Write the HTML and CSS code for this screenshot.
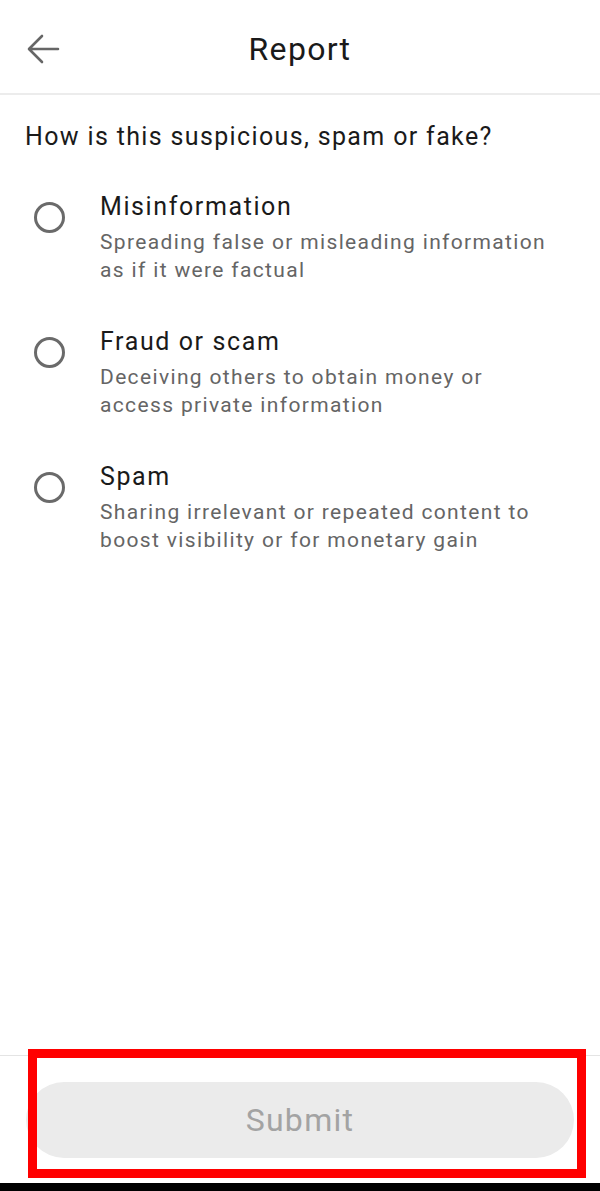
FILE: index.html
```html
<!DOCTYPE html>
<html lang="en">
<head>
<meta charset="utf-8">
<title>Report</title>
<link rel="stylesheet" href="styles.css">
</head>
<body>
<div class="screen">
  <header class="topbar">
    <button class="back" aria-label="Back">
      <svg width="34" height="30" viewBox="0 0 34 30" fill="none" stroke="#666" stroke-width="2.6" stroke-linecap="round" stroke-linejoin="round">
        <path d="M32 15H3.5M16 2L3 15L16 28"/>
      </svg>
    </button>
    <h1 class="title">Report</h1>
  </header>

  <main class="content">
    <p class="question">How is this suspicious, spam or fake?</p>
    <ul class="options">
      <li class="option">
        <span class="radio"></span>
        <div class="option-text">
          <div class="option-title">Misinformation</div>
          <div class="option-desc">Spreading false or misleading information as if it were factual</div>
        </div>
      </li>
      <li class="option">
        <span class="radio"></span>
        <div class="option-text">
          <div class="option-title">Fraud or scam</div>
          <div class="option-desc">Deceiving others to obtain money or access private information</div>
        </div>
      </li>
      <li class="option">
        <span class="radio"></span>
        <div class="option-text">
          <div class="option-title">Spam</div>
          <div class="option-desc">Sharing irrelevant or repeated content to boost visibility or for monetary gain</div>
        </div>
      </li>
    </ul>
  </main>

  <footer class="footer">
    <button class="submit" disabled>Submit</button>
    <div class="highlight"></div>
  </footer>
  <div class="navbar"></div>
</div>
</body>
</html>
```

FILE: styles.css
```css
* { box-sizing: border-box; }
html, body { margin: 0; padding: 0; background: #fff; }
body {
  font-family: Roboto, "Noto Sans", "Liberation Sans", sans-serif;
  color: #1f1f1f;
}
.screen {
  width: 600px;
  height: 1191px;
  display: flex;
  flex-direction: column;
}
.topbar {
  height: 95px;
  flex: none;
  display: flex;
  align-items: center;
  justify-content: center;
  position: relative;
  border-bottom: 2px solid #ececec;
  padding-top: 4px;
}
.back {
  position: absolute;
  left: 26px;
  top: 34px;
  padding: 0;
  border: 0;
  background: none;
  display: flex;
}
.title {
  margin: 0;
  font-size: 32px;
  font-weight: 400;
  letter-spacing: 1.3px;
  color: #1a1a1a;
  line-height: 40px;
}
.content {
  flex: 1;
  padding: 27px 25px 0 25px;
}
.question {
  margin: 0;
  font-size: 25px;
  line-height: 30px;
  letter-spacing: 1.35px;
  color: #1a1a1a;
}
.options {
  list-style: none;
  margin: 40px 0 0 0;
  padding: 0;
  display: flex;
  flex-direction: column;
  gap: 43px;
}
.option {
  display: flex;
  align-items: flex-start;
}
.radio {
  flex: none;
  width: 31px;
  height: 31px;
  border: 3px solid #6a6a6a;
  border-radius: 50%;
  margin: 10px 0 0 9px;
}
.option-text {
  margin-left: 35px;
  width: 455px;
}
.option-title {
  font-size: 25px;
  line-height: 30px;
  letter-spacing: 1.6px;
  color: #1a1a1a;
}
.option-desc {
  margin-top: 6px;
  font-size: 21px;
  line-height: 28px;
  letter-spacing: 1.35px;
  color: #656565;
}
.footer {
  flex: none;
  position: relative;
  border-top: 1px solid #e4e4e4;
  padding: 26px 26px 25px 26px;
}
.submit {
  display: block;
  width: 548px;
  height: 76px;
  border: 0;
  border-radius: 38px;
  background: #ebebeb;
  color: #a3a3a3;
  font-family: Roboto, "Noto Sans", "Liberation Sans", sans-serif;
  font-size: 32px;
  letter-spacing: 1.3px;
  padding: 0;
}
.highlight {
  position: absolute;
  left: 28px;
  top: -7px;
  width: 558px;
  height: 129px;
  border: 9px solid #ff0000;
}
.navbar {
  flex: none;
  height: 8px;
  background: #000;
}
```
